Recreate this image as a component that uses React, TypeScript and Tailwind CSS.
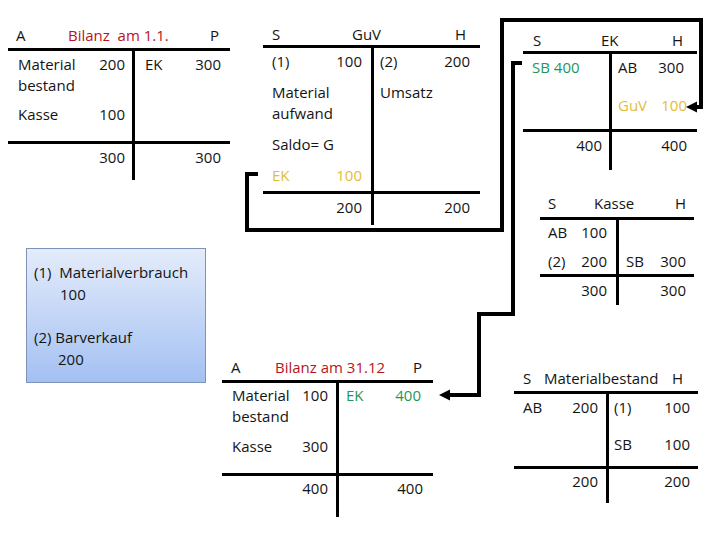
import type { ReactNode } from "react";
import { clsx } from "clsx";

const red = "text-[#b8141d]";
const gold = "text-[#e2bd3a]";
const green = "text-[#1f9659]";

type RowProps = { l?: ReactNode; r?: ReactNode; className?: string };

const Row = ({ l, r, className }: RowProps) => (
    <div className={clsx("flex h-[21px] items-center justify-between whitespace-pre leading-[21px]", className)}>
        <span>{l}</span>
        <span>{r}</span>
    </div>
);

type TAccountProps = {
    pos: string;
    head: string;
    header: ReactNode;
    cols: string;
    bodyH: string;
    foot: string;
    lp: string;
    rp: string;
    left: ReactNode;
    right: ReactNode;
    totals: [ReactNode, ReactNode];
};

// T-Konto: Kopfzeile, Soll/Haben-Spalten, Summenzeile
const TAccount = ({ pos, head, header, cols, bodyH, foot, lp, rp, left, right, totals }: TAccountProps) => (
    <div className={clsx("absolute", pos)}>
        <div className={clsx("flex items-center whitespace-pre border-b-[3px] border-black", head)}>
            {header}
        </div>
        <div className={clsx("grid", cols)}>
            <div className={clsx("border-r-[3px] border-black", bodyH, lp)}>{left}</div>
            <div className={rp}>{right}</div>
            <div className={clsx("border-r-[3px] border-t-[3px] border-black", foot, lp)}>
                <Row r={totals[0]} />
            </div>
            <div className={clsx("border-t-[3px] border-black", foot, rp)}>
                <Row r={totals[1]} />
            </div>
        </div>
    </div>
);

const Arrows = () => (
    <svg className="pointer-events-none absolute left-0 top-0" width="720" height="540" viewBox="0 0 720 540">
        <path d="M258 174 H247 V230 H502 V20 H701 V107 H695" fill="none" stroke="#000" strokeWidth="4" />
        <polygon points="686,107 697,101.5 697,112.5" fill="#000" />
        <path d="M522 63 H513 V314 H479 V395 H449" fill="none" stroke="#000" strokeWidth="4" />
        <polygon points="439,395 450,389.5 450,400.5" fill="#000" />
    </svg>
);

const App = () => {
    return (
        <div className="relative h-[540px] w-[720px] overflow-hidden bg-white font-['Open_Sans',sans-serif] text-[15px] text-[#141414]">
            {/* Bilanz am 1.1. */}
            <TAccount
                pos="left-[8px] top-[22px] w-[222px]"
                head="h-[29px]"
                header={
                    <>
                        <span className="w-[60px] pl-[8px]">A</span>
                        <span className={red}>Bilanz  am 1.1.</span>
                        <span className="ml-auto pr-[11px]">P</span>
                    </>
                }
                cols="grid-cols-[127px_1fr]"
                bodyH="h-[90px]"
                foot="h-[39px] pt-[3px]"
                lp="pl-[10px] pr-[7px]"
                rp="pl-[10px] pr-[9px]"
                left={
                    <>
                        <Row l="Material" r="200" className="mt-[3px]" />
                        <Row l="bestand" />
                        <Row l="Kasse" r="100" className="mt-[8px]" />
                    </>
                }
                right={<Row l="EK" r="300" className="mt-[3px]" />}
                totals={["300", "300"]}
            />

            {/* GuV */}
            <TAccount
                pos="left-[263px] top-[23px] w-[217px]"
                head="h-[25px]"
                header={
                    <>
                        <span className="w-[89px] pl-[9px]">S</span>
                        <span>GuV</span>
                        <span className="ml-auto pr-[14px]">H</span>
                    </>
                }
                cols="grid-cols-[111px_1fr]"
                bodyH="h-[143px]"
                foot="h-[34px] pt-[3px]"
                lp="pl-[9px] pr-[9px]"
                rp="pl-[6px] pr-[10px]"
                left={
                    <>
                        <Row l="(1)" r="100" className="mt-[3px]" />
                        <Row l="Material" className="mt-[10px]" />
                        <Row l="aufwand" />
                        <Row l="Saldo= G" className="mt-[10px]" />
                        <Row l="EK" r="100" className={clsx("mt-[10px]", gold)} />
                    </>
                }
                right={
                    <>
                        <Row l="(2)" r="200" className="mt-[3px]" />
                        <Row l="Umsatz" className="mt-[10px]" />
                    </>
                }
                totals={["200", "200"]}
            />

            {/* EK */}
            <TAccount
                pos="left-[523px] top-[29px] w-[174px]"
                head="h-[25px]"
                header={
                    <>
                        <span className="w-[78px] pl-[10px]">S</span>
                        <span>EK</span>
                        <span className="ml-auto pr-[14px]">H</span>
                    </>
                }
                cols="grid-cols-[89px_1fr]"
                bodyH="h-[75px]"
                foot="h-[41px] pt-[3px]"
                lp="pl-[9px] pr-[7px]"
                rp="pl-[6px] pr-[10px]"
                left={<Row l="SB 400" className={clsx("mt-[3px]", green)} />}
                right={
                    <>
                        <Row l="AB" r={<span className="pr-[3px]">300</span>} className="mt-[3px]" />
                        <Row l="GuV" r="100" className={clsx("mt-[17px]", gold)} />
                    </>
                }
                totals={["400", "400"]}
            />

            {/* Kasse */}
            <TAccount
                pos="left-[540px] top-[189px] w-[154px]"
                head="h-[31px]"
                header={
                    <>
                        <span className="w-[54px] pl-[8px]">S</span>
                        <span>Kasse</span>
                        <span className="ml-auto pr-[8px]">H</span>
                    </>
                }
                cols="grid-cols-[79px_1fr]"
                bodyH="h-[54px]"
                foot="h-[31px] pt-[3px]"
                lp="pl-[8px] pr-[9px]"
                rp="pl-[7px] pr-[8px]"
                left={
                    <>
                        <Row l="AB" r="100" className="mt-[2px]" />
                        <Row l="(2)" r="200" className="mt-[8px]" />
                    </>
                }
                right={<Row l="SB" r="300" className="mt-[31px]" />}
                totals={["300", "300"]}
            />

            {/* Buchungssätze */}
            <div className="absolute left-[26px] top-[248px] h-[135px] w-[180px] border border-[#7f93b8] bg-linear-to-b from-[#e4ecfa] to-[#a4c0f2] pl-[7px] pt-[12px] leading-[22px]">
                <div className="whitespace-pre">(1)  Materialverbrauch</div>
                <div className="pl-[26px]">100</div>
                <div className="mt-[21px]">(2) Barverkauf</div>
                <div className="pl-[24px]">200</div>
            </div>

            {/* Bilanz am 31.12 */}
            <TAccount
                pos="left-[222px] top-[354px] w-[211px]"
                head="h-[29px]"
                header={
                    <>
                        <span className="w-[53px] pl-[9px]">A</span>
                        <span className={red}>Bilanz am 31.12</span>
                        <span className="ml-auto pr-[11px]">P</span>
                    </>
                }
                cols="grid-cols-[117px_1fr]"
                bodyH="h-[90px]"
                foot="h-[44px] pt-[2px]"
                lp="pl-[10px] pr-[8px]"
                rp="pl-[7px] pr-[10px]"
                left={
                    <>
                        <Row l="Material" r="100" className="mt-[2px]" />
                        <Row l="bestand" />
                        <Row l="Kasse" r="300" className="mt-[9px]" />
                    </>
                }
                right={<Row l="EK" r={<span className="pr-[2px]">400</span>} className={clsx("mt-[2px]", green)} />}
                totals={["400", "400"]}
            />

            {/* Materialbestand */}
            <TAccount
                pos="left-[514px] top-[365px] w-[184px]"
                head="h-[29px]"
                header={
                    <>
                        <span className="w-[30px] pl-[9px]">S</span>
                        <span>Materialbestand</span>
                        <span className="ml-auto pr-[15px]">H</span>
                    </>
                }
                cols="grid-cols-[95px_1fr]"
                bodyH="h-[72px]"
                foot="h-[37px] pt-[2px]"
                lp="pl-[9px] pr-[8px]"
                rp="pl-[5px] pr-[8px]"
                left={<Row l="AB" r="200" className="mt-[3px]" />}
                right={
                    <>
                        <Row l="(1)" r="100" className="mt-[3px]" />
                        <Row l="SB" r="100" className="mt-[16px]" />
                    </>
                }
                totals={["200", "200"]}
            />

            <Arrows />
        </div>
    );
};

export default App;
